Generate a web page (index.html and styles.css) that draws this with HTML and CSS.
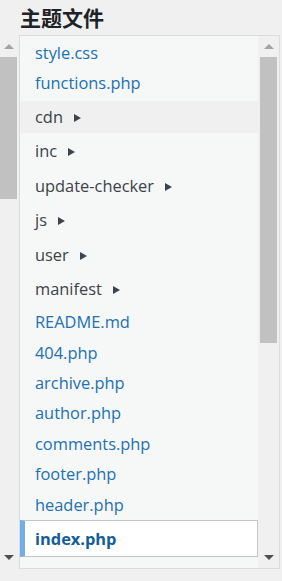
FILE: index.html
```html
<!DOCTYPE html>
<html lang="zh-CN">
<head>
    <meta charset="UTF-8">
    <meta name="viewport" content="width=device-width, initial-scale=1.0">
    <title>主题文件</title>
    <link rel="stylesheet" href="styles.css">
</head>
<body>
    <!-- Заголовок -->
    <h2 class="files-title">主题文件</h2>

    <div class="files-panel">
        <!-- Полоса прокрутки слева (от соседней области) -->
        <div class="scrollbar scrollbar-outer">
            <span class="scroll-btn"><i class="arrow-up"></i></span>
            <div class="scroll-track"><div class="scroll-thumb thumb-short"></div></div>
            <span class="scroll-btn"><i class="arrow-down"></i></span>
        </div>

        <!-- Дерево файлов темы -->
        <div class="files-box">
            <ul class="file-tree">
                <li><a href="#" class="file">style.css</a></li>
                <li><a href="#" class="file">functions.php</a></li>
                <li class="folder first-folder hover"><span class="folder-label">cdn</span></li>
                <li class="folder"><span class="folder-label">inc</span></li>
                <li class="folder"><span class="folder-label">update-checker</span></li>
                <li class="folder"><span class="folder-label">js</span></li>
                <li class="folder"><span class="folder-label">user</span></li>
                <li class="folder"><span class="folder-label">manifest</span></li>
                <li><a href="#" class="file">README.md</a></li>
                <li><a href="#" class="file">404.php</a></li>
                <li><a href="#" class="file">archive.php</a></li>
                <li><a href="#" class="file">author.php</a></li>
                <li><a href="#" class="file">comments.php</a></li>
                <li><a href="#" class="file">footer.php</a></li>
                <li><a href="#" class="file">header.php</a></li>
                <li class="current-file"><a href="#" class="file">index.php</a></li>
            </ul>

            <div class="scrollbar scrollbar-inner">
                <span class="scroll-btn"><i class="arrow-up"></i></span>
                <div class="scroll-track"><div class="scroll-thumb thumb-long"></div></div>
                <span class="scroll-btn"><i class="arrow-down"></i></span>
            </div>
        </div>
    </div>
</body>
</html>
```

FILE: styles.css
```css
/* Общие стили */
body {
    font-family: 'Open Sans', 'Noto Sans CJK SC', sans-serif;
    margin: 0;
    padding: 0;
    background-color: #F0F0F0;
    color: #3C434A;
}

/* Заголовок */
.files-title {
    margin: 0;
    padding-left: 20px;
    height: 35px;
    line-height: 35px;
    font-family: 'Noto Sans CJK SC', sans-serif;
    font-size: 21px;
    font-weight: 700;
    color: #1D2327;
}

.files-panel {
    display: flex;
    height: 534px;
}

/* Полосы прокрутки */
.scrollbar {
    display: flex;
    flex-direction: column;
    background-color: #F0F0F0;
}

.scrollbar-outer {
    width: 17px;
    margin-right: 2px;
    padding-top: 1px;
    padding-bottom: 1px;
}

.scrollbar-inner {
    width: 17px;
    padding: 0 2px;
}

.scroll-btn {
    height: 21px;
    display: flex;
    justify-content: center;
    align-items: center;
}

.arrow-up {
    width: 0;
    height: 0;
    border-left: 5px solid transparent;
    border-right: 5px solid transparent;
    border-bottom: 5px solid #A3A3A3;
}

.arrow-down {
    width: 0;
    height: 0;
    border-left: 5px solid transparent;
    border-right: 5px solid transparent;
    border-top: 5px solid #505050;
}

.scroll-track {
    flex: 1;
}

.scroll-thumb {
    background-color: #C1C1C1;
}

.thumb-short {
    height: 142px;
}

.thumb-long {
    height: 286px;
}

/* Блок со списком */
.files-box {
    display: flex;
    width: 259px;
    border: 1px solid #DCDCDE;
    background-color: #F6F7F7;
}

.file-tree {
    flex: 1;
    list-style: none;
    margin: 0;
    padding: 2px 0 0;
    overflow: hidden;
    font-size: 16.4px;
}

.file {
    display: block;
    height: 30.4px;
    line-height: 30.4px;
    padding-left: 15px;
    color: #2271B1;
    text-decoration: none;
    white-space: nowrap;
}

/* Папки */
.folder {
    height: 32px;
    line-height: 32px;
    padding-left: 15px;
    margin-bottom: 2.4px;
    white-space: nowrap;
}

.first-folder {
    margin-top: 2.2px;
}

.folder.hover {
    background-color: #F0F0F1;
}

.folder-label::after {
    content: "";
    display: inline-block;
    margin-left: 11px;
    vertical-align: 1px;
    border-left: 7px solid #3C434A;
    border-top: 4px solid transparent;
    border-bottom: 4px solid transparent;
}

/* Текущий файл */
.current-file .file {
    height: 35px;
    line-height: 35px;
    padding-left: 10px;
    background-color: #FFFFFF;
    border: 1px solid #C3C4C7;
    border-left: 5px solid #72AEE6;
    font-weight: 700;
    color: #135E96;
}
```
